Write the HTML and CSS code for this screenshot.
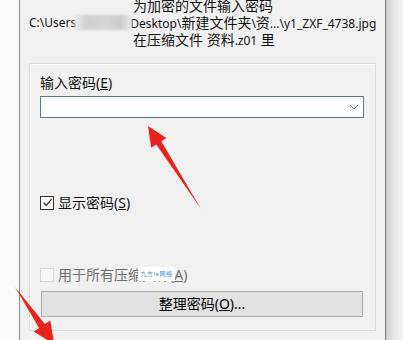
FILE: index.html
```html
<!DOCTYPE html>
<html lang="zh-CN">
<head>
<meta charset="utf-8">
<title>输入密码</title>
<link rel="stylesheet" href="styles.css">
</head>
<body>
<div class="screen">
  <div class="desk"></div>
  <div class="window">
    <div class="info">
      <div class="line indent">为加密的文件输入密码</div>
      <div class="line path"><span class="lat">C:\Users</span><span class="blur"></span><span><span class="lat">Desktop\</span>新建文件夹<span class="lat">\</span>资<span class="lat">...\y1_ZXF_4738.jpg</span></span></div>
      <div class="line indent">在压缩文件 资料<span class="lat">.z01</span> 里</div>
    </div>
    <div class="group">
      <div class="label">输入密码(<u>E</u>)</div>
      <div class="combo">
        <svg class="chev" width="10" height="6" viewBox="0 0 10 6"><path d="M1 1 L5 5 L9 1" fill="none" stroke="#606060" stroke-width="1"/></svg>
      </div>
      <div class="check">
        <span class="box"><svg width="11" height="11" viewBox="0 0 11 11"><path d="M1.5 5.5 L4.2 8.3 L9.6 2.2" fill="none" stroke="#222" stroke-width="1.2"/></svg></span>
        <span>显示密码(<u>S</u>)</span>
      </div>
      <div class="check disabled">
        <span class="box"></span>
        <span>用于所有压缩文件(<u>A</u>)</span>
        <span class="wm">九方ie网络</span>
      </div>
      <div class="btn">整理密码(<u>O</u>)...</div>
    </div>
  </div>
  <div class="shade"></div>
  <svg class="arrows" width="403" height="340" viewBox="0 0 403 340">
    <polygon points="148,126 166.4,138.1 161.3,141.3 201,209 156.3,144.5 151.2,147.7" fill="#e8231d"/>
    <polygon points="15,287 44.9,324.1 50.3,320.5 54.2,344.3 33.7,331.5 39.1,327.9" fill="#e8231d"/>
  </svg>
</div>
</body>
</html>
```

FILE: styles.css
```css
html, body {
  margin: 0;
  padding: 0;
  background: #f0f0f0;
}

.screen {
  position: relative;
  width: 403px;
  height: 340px;
  overflow: hidden;
  display: flex;
  font-family: "Noto Sans", "Noto Sans CJK SC", sans-serif;
  font-size: 14px;
  color: #111;
}

.desk {
  width: 19px;
  flex: none;
  background: #fafafa;
}

.window {
  width: 367px;
  flex: none;
  box-sizing: border-box;
  border-left: 1px solid #8c8c8c;
  border-right: 1px solid #7c7c7c;
  background: #f0f0f0;
}

.shade {
  flex: 1;
  background: linear-gradient(to right, #cdcdcd, #e6e6e6 45%, #f4f4f4);
}

.info {
  margin-top: -3px;
}

.line {
  height: 17px;
  line-height: 17px;
  white-space: nowrap;
}

.lat {
  font-size: 12px;
}

.indent {
  padding-left: 113px;
}

.path {
  padding-left: 9px;
  display: flex;
  align-items: center;
}

.blur {
  width: 58px;
  height: 15px;
  flex: none;
  margin: 0 -2px;
  background: linear-gradient(to right, rgba(235,235,235,0.7), #cfcfcf 22%, #d6d6d6 55%, #cccccc 80%, rgba(235,235,235,0.8));
  filter: blur(1.2px);
  position: relative;
}

.group {
  margin: 15px 0 0 9px;
  width: 347px;
  box-sizing: border-box;
  border: 1px solid #dcdcdc;
  box-shadow: inset 1px 1px 0 #ffffff;
  padding: 9px 11px 13px 10px;
}

.label {
  height: 19px;
  line-height: 19px;
}

.combo {
  margin-top: 4px;
  height: 22px;
  box-sizing: border-box;
  border: 1px solid #5f7789;
  background: #fcfeff;
  display: flex;
  align-items: center;
  justify-content: flex-end;
  padding-right: 4px;
}

.chev {
  display: block;
}

.check {
  position: relative;
  height: 19px;
  line-height: 19px;
  display: flex;
  align-items: center;
  gap: 4px;
  margin-top: 75px;
}

.check.disabled {
  margin-top: 53px;
  color: #6d6d6d;
}

.box {
  width: 14px;
  height: 14px;
  box-sizing: border-box;
  border: 1px solid #333;
  background: #fff;
  display: flex;
  align-items: center;
  justify-content: center;
}

.disabled .box {
  border-color: #d6d6d6;
  background: #f7f7f7;
}

.wm {
  position: absolute;
  left: 98px;
  top: 2px;
  width: 37px;
  height: 14px;
  background: #fff;
  color: #3a8fd2;
  font-size: 6px;
  line-height: 14px;
  text-align: center;
  letter-spacing: 0.5px;
}

.btn {
  margin: 7px 1px 0 1px;
  height: 26px;
  box-sizing: border-box;
  border: 1px solid #adadad;
  background: #e1e1e1;
  text-align: center;
  line-height: 24px;
  color: #000;
}

.arrows {
  position: absolute;
  left: 0;
  top: 0;
  pointer-events: none;
}
```
